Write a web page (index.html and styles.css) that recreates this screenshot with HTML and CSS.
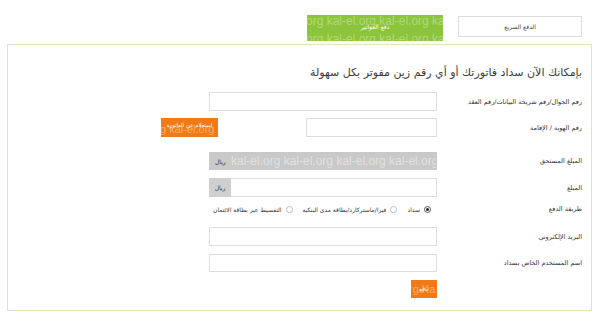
FILE: index.html
```html
<!DOCTYPE html>
<html lang="ar" dir="rtl">
<head>
<meta charset="utf-8">
<title>سداد الفواتير</title>
<link rel="stylesheet" href="styles.css">
</head>
<body>
<div class="page">
  <div class="topbar">
    <a class="quick">الدفع السريع</a>
    <a class="bills">
      <span class="wm wm-top">org kal-el.org kal-el.org ka</span>
      <span class="bills-label">دفع الفواتير</span>
      <span class="wm wm-bottom">org kal-el.org kal-el.org ka</span>
    </a>
  </div>
  <div class="box">
    <h1 class="title">بإمكانك الآن سداد فاتورتك أو أي رقم زين مفوتر بكل سهولة</h1>
    <form class="form">
      <div class="row r1">
        <label class="lbl">رقم الجوال/رقم شريحة البيانات/رقم العقد</label>
        <div class="input"></div>
      </div>
      <div class="row r2">
        <label class="lbl">رقم الهوية / الإقامة</label>
        <div class="input short"></div>
        <a class="btn inquiry">
          <span class="btn-text">استعلام عن الفاتورة</span>
          <span class="wm wm-inq">g kal-el.org</span>
        </a>
      </div>
      <div class="row r3">
        <label class="lbl">المبلغ المستحق</label>
        <div class="input gray">
          <span class="wm wm-gray">kal-el.org kal-el.org kal-el.org kal-el.org k</span>
          <span class="cur">ريال</span>
        </div>
      </div>
      <div class="row r4">
        <label class="lbl">المبلغ</label>
        <div class="input addon-wrap">
          <span class="addon">ريال</span>
        </div>
      </div>
      <div class="row r5">
        <label class="lbl">طريقة الدفع</label>
        <div class="radios">
          <span class="opt"><span class="radio checked"></span>سداد</span>
          <span class="opt"><span class="radio"></span>فيزا/ماستركارد/بطاقة مدى البنكية</span>
          <span class="opt"><span class="radio"></span>التقسيط عبر بطاقة الائتمان</span>
        </div>
      </div>
      <div class="row r6">
        <label class="lbl">البريد الإلكتروني</label>
        <div class="input"></div>
      </div>
      <div class="row r7">
        <label class="lbl">اسم المستخدم الخاص بسداد</label>
        <div class="input"></div>
      </div>
      <div class="row r8">
        <span class="lbl"></span>
        <a class="btn submit">
          <span class="btn-text">ادفع</span>
          <span class="wm wm-sub">rg Ka</span>
        </a>
      </div>
    </form>
  </div>
</div>
</body>
</html>
```

FILE: styles.css
```css
body {
  margin: 0;
  background: #fff;
  font-family: "DejaVu Sans", "Liberation Sans", sans-serif;
  color: #333;
}

.page {
  direction: rtl;
}

.topbar {
  display: flex;
  align-items: flex-start;
  gap: 15px;
  height: 29px;
  padding: 15px 18px 0 0;
}

.quick {
  box-sizing: border-box;
  width: 124px;
  height: 21px;
  margin-top: 1px;
  border: 1px solid #dcdcdc;
  display: flex;
  align-items: center;
  justify-content: center;
  font-size: 6px;
  color: #444;
}

.bills {
  position: relative;
  width: 136px;
  height: 26px;
  background: #8cc43b;
  overflow: hidden;
  display: flex;
  align-items: center;
  justify-content: center;
}

.bills-label {
  position: relative;
  font-size: 6px;
  color: #fff;
  margin-top: -3px;
}

.wm {
  position: absolute;
  direction: ltr;
  white-space: nowrap;
  font-family: "Liberation Sans", sans-serif;
  color: rgba(255, 255, 255, 0.35);
}

.wm-top {
  left: -1px;
  top: -1px;
  font-size: 12px;
}

.wm-bottom {
  left: -1px;
  top: 17px;
  font-size: 12px;
}

.box {
  box-sizing: border-box;
  height: 267px;
  margin: 0 8px 0 7px;
  border: 1px solid #dfe3bf;
  padding-right: 9px;
}

.title {
  margin: 20px 0 0;
  font-size: 11px;
  line-height: 16px;
  font-weight: normal;
  color: #3a3a3a;
}

.form {
  display: flex;
  flex-direction: column;
  margin-top: 11px;
}

.row {
  display: flex;
  align-items: center;
  height: 19px;
}

.r2 { margin-top: 7px; }
.r3 { margin-top: 15px; height: 18px; }
.r4 { margin-top: 8px; }
.r5 { margin-top: 7px; height: 10px; }
.r6 { margin-top: 13px; }
.r7 { margin-top: 8px; height: 18px; }
.r8 { margin-top: 8px; height: 18px; }

.lbl {
  box-sizing: border-box;
  width: 145px;
  flex: none;
  font-size: 6.5px;
  color: #333;
}

.input {
  box-sizing: border-box;
  width: 228px;
  height: 100%;
  border: 1px solid #dedede;
  background: #fff;
  position: relative;
}

.input.short {
  width: 131px;
}

.input.gray {
  background: #c9c9c9;
  border-color: #c9c9c9;
  overflow: hidden;
  display: flex;
  justify-content: flex-end;
  align-items: center;
}

.wm-gray {
  left: 21px;
  top: 1px;
  font-size: 12px;
  color: rgba(255, 255, 255, 0.45);
}

.cur {
  position: relative;
  font-size: 6px;
  color: #333;
  margin-left: 5px;
}

.addon-wrap {
  display: flex;
  justify-content: flex-end;
}

.addon {
  width: 22px;
  margin: -1px;
  background: #cfcfcf;
  font-size: 6px;
  display: flex;
  align-items: center;
  justify-content: center;
  color: #333;
}

.btn {
  position: relative;
  overflow: hidden;
  background: #ef7a16;
  display: flex;
  justify-content: center;
  color: #fff;
}

.inquiry {
  width: 57px;
  height: 19px;
  margin-right: 88px;
  margin-top: -1px;
  align-items: flex-start;
}

.inquiry .btn-text {
  position: relative;
  font-size: 5.5px;
  margin-top: 4px;
}

.wm-inq {
  left: -1px;
  top: 5px;
  font-size: 11px;
  color: rgba(255, 255, 255, 0.4);
}

.submit {
  width: 26px;
  height: 18px;
  align-items: center;
}

.submit .btn-text {
  position: relative;
  font-size: 5.5px;
}

.wm-sub {
  left: -2px;
  top: 3px;
  font-size: 11px;
  color: rgba(255, 255, 255, 0.4);
}

.radios {
  display: flex;
  align-items: center;
  gap: 10px;
  font-size: 6px;
  color: #333;
  margin-right: 6px;
}

.opt {
  display: flex;
  align-items: center;
  gap: 4px;
}

.radio {
  box-sizing: border-box;
  width: 7px;
  height: 7px;
  border: 1px solid #bbb;
  border-radius: 50%;
  background: #fff;
  position: relative;
}

.radio.checked {
  border-color: #555;
}

.radio.checked::after {
  content: "";
  position: absolute;
  left: 1px;
  top: 1px;
  width: 3px;
  height: 3px;
  border-radius: 50%;
  background: #222;
}
```
